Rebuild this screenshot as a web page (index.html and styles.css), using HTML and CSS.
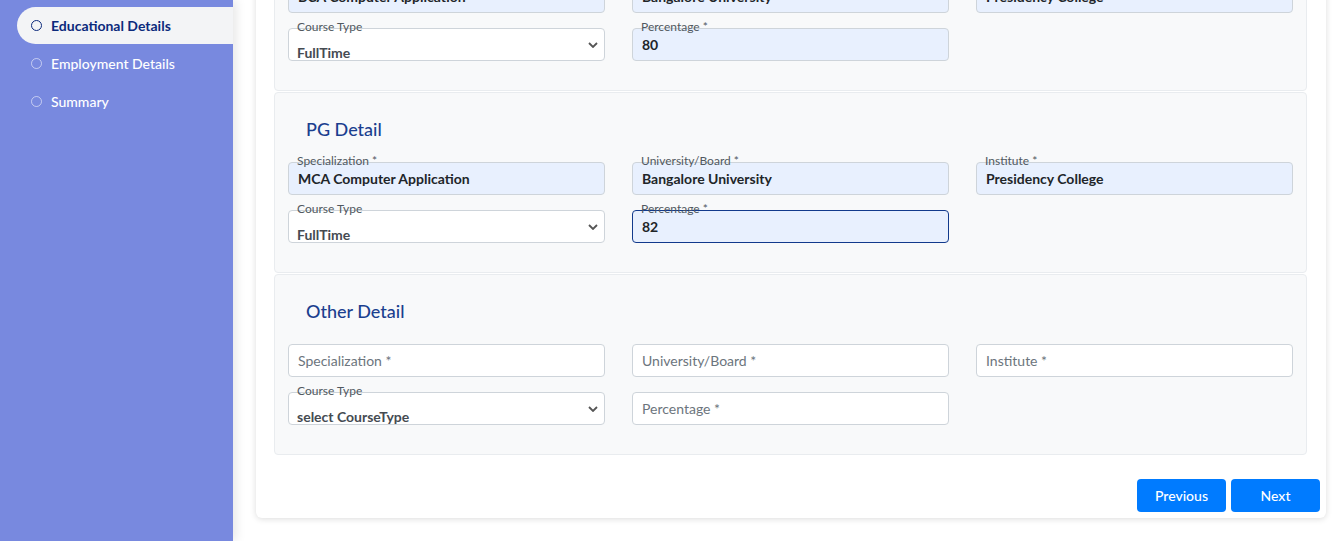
FILE: index.html
```html
<!DOCTYPE html>
<html lang="en">
<head>
<meta charset="utf-8">
<title>Educational Details</title>
<link rel="stylesheet" href="styles.css">
</head>
<body>
<aside class="sidebar">
  <nav class="steps">
    <div class="step active"><span class="dot"></span><span>Educational Details</span></div>
    <div class="step"><span class="dot"></span><span>Employment Details</span></div>
    <div class="step"><span class="dot"></span><span>Summary</span></div>
  </nav>
</aside>
<main class="main">
  <div class="card">
    <div class="sections">
      <section class="sec">
        <h5 class="sec-title">UG Detail</h5>
        <div class="grid">
          <div class="fg"><label class="lbl">Specialization *</label><input class="inp filled" value="BCA Computer Application" readonly></div>
          <div class="fg"><label class="lbl">University/Board *</label><input class="inp filled" value="Bangalore University" readonly></div>
          <div class="fg"><label class="lbl">Institute *</label><input class="inp filled" value="Presidency College" readonly></div>
          <div class="fg"><label class="lbl">Course Type</label><div class="sel"><span class="sel-val">FullTime</span><svg class="chev" width="10" height="6" viewBox="0 0 10 6"><path d="M1 1l4 4 4-4" fill="none" stroke="#555" stroke-width="1.8"/></svg></div></div>
          <div class="fg"><label class="lbl">Percentage *</label><input class="inp filled" value="80" readonly></div>
        </div>
      </section>
      <section class="sec">
        <h5 class="sec-title">PG Detail</h5>
        <div class="grid">
          <div class="fg"><label class="lbl">Specialization *</label><input class="inp filled" value="MCA Computer Application" readonly></div>
          <div class="fg"><label class="lbl">University/Board *</label><input class="inp filled" value="Bangalore University" readonly></div>
          <div class="fg"><label class="lbl">Institute *</label><input class="inp filled" value="Presidency College" readonly></div>
          <div class="fg"><label class="lbl">Course Type</label><div class="sel"><span class="sel-val">FullTime</span><svg class="chev" width="10" height="6" viewBox="0 0 10 6"><path d="M1 1l4 4 4-4" fill="none" stroke="#555" stroke-width="1.8"/></svg></div></div>
          <div class="fg"><label class="lbl">Percentage *</label><input class="inp filled focus" value="82" readonly></div>
        </div>
      </section>
      <section class="sec">
        <h5 class="sec-title">Other Detail</h5>
        <div class="grid">
          <div class="fg"><input class="inp" placeholder="Specialization *"></div>
          <div class="fg"><input class="inp" placeholder="University/Board *"></div>
          <div class="fg"><input class="inp" placeholder="Institute *"></div>
          <div class="fg"><label class="lbl">Course Type</label><div class="sel"><span class="sel-val">select CourseType</span><svg class="chev" width="10" height="6" viewBox="0 0 10 6"><path d="M1 1l4 4 4-4" fill="none" stroke="#555" stroke-width="1.8"/></svg></div></div>
          <div class="fg"><input class="inp" placeholder="Percentage *"></div>
        </div>
      </section>
    </div>
    <div class="actions">
      <button class="btn">Previous</button>
      <button class="btn">Next</button>
    </div>
  </div>
</main>
</body>
</html>
```

FILE: styles.css
```css
* { box-sizing: border-box; }
html, body { margin: 0; padding: 0; height: 100%; }
body {
  display: flex;
  background: #ffffff;
  font-family: Lato, "Noto Sans", "Liberation Sans", sans-serif;
  font-size: 14px;
  color: #212529;
  overflow: hidden;
}
.sidebar {
  width: 233px;
  flex: none;
  height: 541px;
  background: #7889df;
  box-shadow: 3px 0 10px rgba(0,0,0,0.10);
  position: relative;
  z-index: 1;
}
.steps { padding-top: 7px; padding-left: 17px; }
.step {
  height: 37px;
  margin-bottom: 1px;
  display: flex;
  align-items: center;
  gap: 9px;
  padding-left: 14px;
  color: #ffffff;
  font-size: 14px;
  font-weight: 500;
}
.step .dot {
  width: 11px;
  height: 11px;
  border-radius: 50%;
  border: 1.5px solid rgba(255,255,255,0.55);
  flex: none;
}
.step.active {
  background: #f3f4f6;
  border-radius: 20px 0 0 20px;
  color: #0c2a7c;
  font-weight: 700;
}
.step.active .dot { border-color: #0c2a7c; }

.main {
  flex: 1;
  padding: 0 18px 0 23px;
}
.card {
  margin-top: -90px;
  background: #ffffff;
  border-radius: 6px;
  box-shadow: 0 1px 6px rgba(0,0,0,0.14);
  padding: 0 6px 6px 18px;
}
.sections { margin-right: 13px; }
.sec {
  background: #f8f9fa;
  border: 1px solid #e9ecef;
  border-radius: 4px;
  padding: 0 13px 29px 13px;
  margin-bottom: 1px;
}
.sec-title {
  margin: 0;
  padding: 24px 0 0 18px;
  height: 69px;
  line-height: 24px;
  font-size: 18px;
  font-weight: 500;
  color: #1b3f8f;
}
.grid {
  display: grid;
  grid-template-columns: repeat(3, 1fr);
  column-gap: 27px;
  row-gap: 15px;
}
.fg { position: relative; height: 33px; }
.lbl {
  position: absolute;
  top: -8px;
  left: 8px;
  z-index: 2;
  font-size: 12px;
  line-height: 14px;
  color: #505860;
  padding: 0 1px;
  background: linear-gradient(to bottom, #f8f9fa 0, #f8f9fa 8px, transparent 8px);
}
.inp {
  display: block;
  width: 100%;
  height: 33px;
  border: 1px solid #ced4da;
  border-radius: 4px;
  background: #ffffff;
  font: inherit;
  font-size: 14px;
  color: #212529;
  padding: 0 9px;
  outline: none;
}
.inp.filled { background: #e8f0fe; font-weight: 700; }
.inp.focus { border-color: #123a8c; }
.inp::placeholder { color: #6c757d; font-weight: 400; }
.sel {
  height: 33px;
  border: 1px solid #ced4da;
  border-radius: 4px;
  background: #ffffff;
  overflow: hidden;
  position: relative;
  padding: 14px 30px 0 8px;
}
.sel-val {
  display: block;
  line-height: 20px;
  font-weight: 700;
  color: #454b52;
  white-space: nowrap;
}
.chev {
  position: absolute;
  right: 6px;
  top: 13px;
}
.actions {
  display: flex;
  justify-content: flex-end;
  gap: 5px;
  margin-top: 24px;
}
.btn {
  width: 89px;
  height: 33px;
  border: none;
  border-radius: 4px;
  background: #007bff;
  color: #ffffff;
  font: inherit;
  font-size: 14px;
  font-weight: 500;
}
```
